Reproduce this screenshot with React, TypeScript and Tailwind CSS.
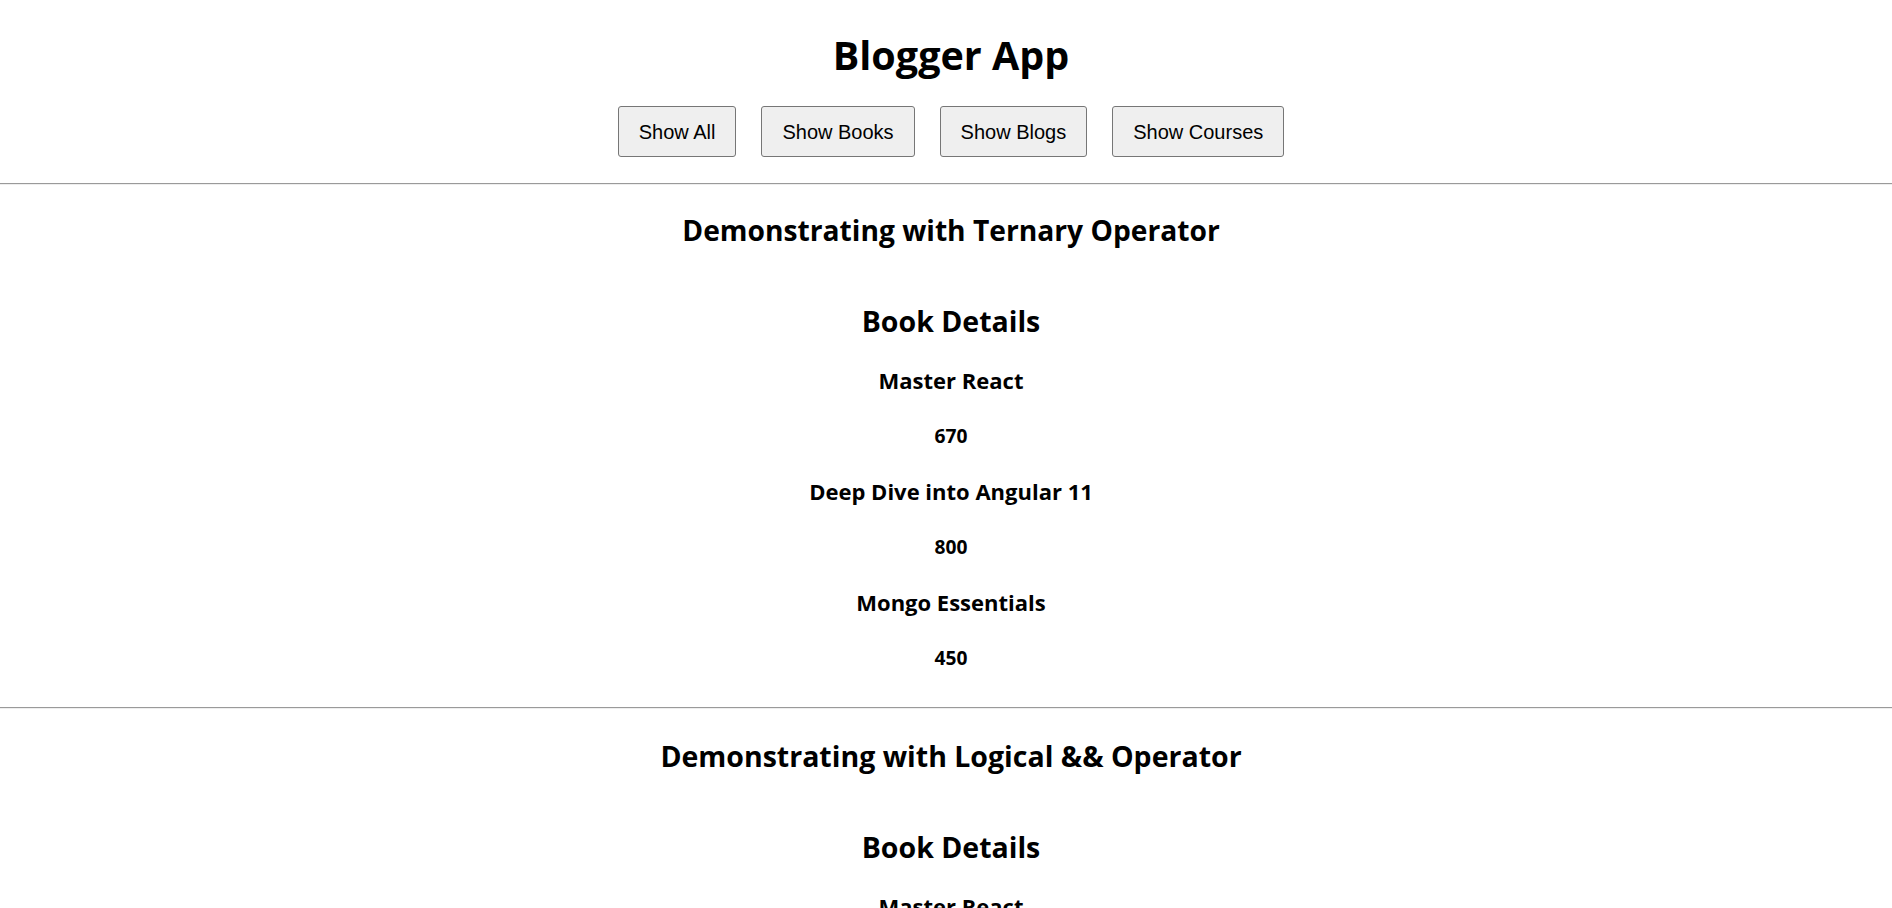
const books = [
  { id: 1, bname: 'Master React', price: 670 },
  { id: 2, bname: 'Deep Dive into Angular 11', price: 800 },
  { id: 3, bname: 'Mongo Essentials', price: 450 },
];

const buttons = ['Show All', 'Show Books', 'Show Blogs', 'Show Courses'];

function Divider() {
  return <div className="w-full border-t border-b border-t-[#9a9a9a] border-b-[#eeeeee]" />;
}

function BookDetails() {
  return (
    <div className="flex flex-col items-center">
      <h2 className="mt-[53px] text-[28.5px] leading-[38px] font-bold">Book Details</h2>
      {books.map((book) => (
        <div key={book.id} className="flex flex-col items-center first:mt-[3.5px]">
          <h3 className="mt-[25px] text-[22px] leading-[30px] font-bold">{book.bname}</h3>
          <h4 className="mt-[26px] text-[19.2px] leading-[30px] font-bold">{book.price}</h4>
        </div>
      ))}
    </div>
  );
}

export default function App() {
  return (
    <div className="min-h-screen bg-white text-black font-['Open_Sans',sans-serif]">
      {/* Header */}
      <div className="flex flex-col items-center pl-[10px]">
        <h1 className="mt-[30px] text-[39.5px] leading-[50px] font-bold">Blogger App</h1>
        <div className="mt-[26px] flex gap-[25px]">
          {buttons.map((label) => (
            <button
              key={label}
              className="h-[51px] px-[20px] bg-[#efefef] border border-[#767676] rounded-[3px] text-[20px] font-['Liberation_Sans',Arial,sans-serif]"
            >
              {label}
            </button>
          ))}
        </div>
      </div>

      <div className="mt-[26px]">
        <Divider />
      </div>

      {/* Ternary section */}
      <div className="flex flex-col items-center pl-[10px]">
        <h2 className="mt-[26px] text-[28.2px] leading-[38px] font-bold">Demonstrating with Ternary Operator</h2>
        <BookDetails />
      </div>

      <div className="mt-[34px]">
        <Divider />
      </div>

      {/* Logical && section */}
      <div className="flex flex-col items-center pl-[10px] pb-10">
        <h2 className="mt-[28px] text-[28.5px] leading-[38px] font-bold">Demonstrating with Logical &amp;&amp; Operator</h2>
        <BookDetails />
      </div>
    </div>
  );
}
